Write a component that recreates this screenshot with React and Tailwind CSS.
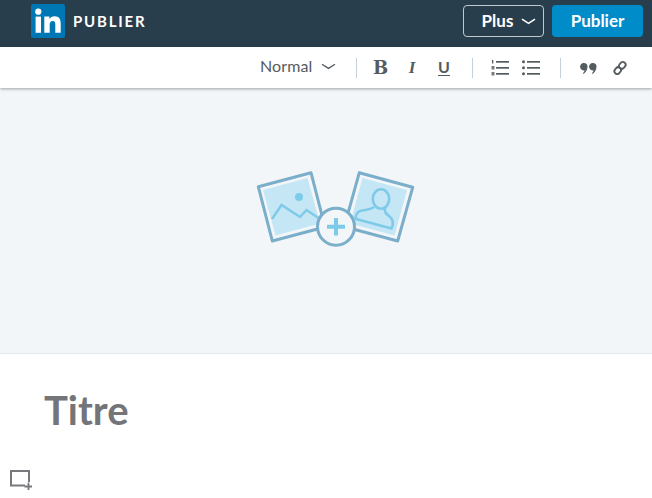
const ui = { fontFamily: '"Lato", "Open Sans", sans-serif' };

function Chevron({ className, color, weight }) {
  return (
    <svg width="15" height="7" viewBox="0 0 15 7" className={className} fill="none">
      <path d="M1 1.200 L7.500 5.400 L14 1.200" stroke={color} strokeWidth={weight} />
    </svg>
  );
}

function Logo() {
  return (
    <svg width="34" height="34" viewBox="0 0 34 34">
      <rect width="34" height="34" rx="2" fill="#0077b5" />
      <circle cx="7.300" cy="7.700" r="3.100" fill="#fff" />
      <rect x="4.600" y="12.600" width="5.400" height="16.200" fill="#fff" />
      <path d="M13.300 12.600h5.100v2.300c.9-1.500 2.600-2.700 5.200-2.700 4.800 0 6.100 3 6.100 7.400v9.200h-5.400v-8.200c0-2-.4-3.700-2.500-3.700-2.200 0-3.100 1.600-3.100 3.700v8.200h-5.400z" fill="#fff" />
    </svg>
  );
}

function Separator() {
  return <div className="w-px h-5 bg-[#c5d0d8]" />;
}

function HeroIcon() {
  const frame = "#7aaecb";
  const accent = "#7dcbe8";
  return (
    <svg width="180" height="100" viewBox="0 0 180 100" fill="none">
      <polygon points="14.300,26.700 67,12.700 81,67 28.300,81" fill="#f3f6f8" stroke={frame} strokeWidth="3" strokeLinejoin="round" />
      <polygon points="19,30 63.500,18 76,63.500 31.500,75.500" fill="#c4e6f5" />
      <path d="M28 59 L37.500 45 L56 57 L62.500 50 L76 59" stroke={accent} strokeWidth="2.400" />
      <circle cx="55" cy="37" r="4" fill={accent} />
      <polygon points="115.300,12.700 168.700,27.300 153.700,81 100.300,66.700" fill="#f3f6f8" stroke={frame} strokeWidth="3" strokeLinejoin="round" />
      <polygon points="118.500,18 163,30 150.500,75.500 106,63.500" fill="#c4e6f5" />
      <ellipse cx="137" cy="39" rx="8.200" ry="9.700" stroke={accent} strokeWidth="2.600" />
      <path d="M130 47 C126 50 120 50 116 51 C113 52 111 56 112 59 L147.500 68.500 C150 63 149 59 145 56 C142 54 140 52 141 48" stroke={accent} strokeWidth="2.600" strokeLinejoin="round" />
      <circle cx="92" cy="66.700" r="18.500" fill="#f3f6f8" stroke={frame} strokeWidth="3" />
      <path d="M92 58 V75.500 M83 66.700 H101" stroke={accent} strokeWidth="4" />
    </svg>
  );
}

export default function App() {
  return (
    <div className="w-[652px] h-[498px] overflow-hidden bg-white flex flex-col" style={ui}>
      <header className="h-[47px] shrink-0 bg-[#293e4c] flex items-start pl-[31px] pr-[9px]">
        <div className="mt-1 mr-2"><Logo /></div>
        <span className="mt-[12px] text-[15px] leading-[18px] font-bold tracking-[1.8px] text-white">PUBLIER</span>
        <div className="ml-auto mt-[5px] flex gap-2">
          <button className="w-[81px] h-8 rounded-sm border border-[#c0c9cf] flex items-center justify-center gap-[8px] pl-[11px] text-white text-[17px] leading-5 font-bold">
            Plus
            <Chevron color="#ffffff" weight="1.600" />
          </button>
          <button className="w-[91px] h-8 rounded-sm bg-[#008cc9] text-white text-[17px] font-bold">Publier</button>
        </div>
      </header>

      <div className="relative z-10 h-[41px] shrink-0 bg-white shadow-[0_1px_3px_rgba(0,0,0,0.35)] flex items-center pl-[260px] text-[#555c60]">
        <span className="text-[16px] leading-5 w-[61px] -mt-[3px] tracking-[0.1px]">Normal</span>
        <Chevron color="#555c60" weight="1.300" className="-mt-0.5" />
        <div className="ml-5"><Separator /></div>
        <span className="w-[17px] ml-[15px] text-center text-[18px] font-bold" style={{ fontFamily: '"DejaVu Serif", serif' }}>B</span>
        <span className="w-[14px] ml-[16px] text-center text-[17px] italic font-bold" style={{ fontFamily: '"Liberation Serif", serif' }}>I</span>
        <span className="w-[16px] ml-[17px] text-center text-[16px] font-bold underline underline-offset-2 -mt-0.5">U</span>
        <div className="ml-5"><Separator /></div>
        <svg width="18" height="16" viewBox="0 0 18 16" className="ml-[18px]" fill="#555c60">
          <rect x="5" y="1" width="13" height="1.700" />
          <rect x="5" y="7" width="13" height="1.700" />
          <rect x="5" y="13" width="13" height="1.700" />
          <rect x="1" y="0" width="1.300" height="3.500" />
          <rect x="0.500" y="6" width="3" height="3.500" opacity="0.8" />
          <rect x="0.500" y="12" width="3" height="3.500" opacity="0.8" />
        </svg>
        <svg width="18" height="16" viewBox="0 0 18 16" className="ml-[13px]" fill="#555c60">
          <rect x="5" y="1" width="13" height="1.700" />
          <rect x="5" y="7" width="13" height="1.700" />
          <rect x="5" y="13" width="13" height="1.700" />
          <circle cx="1.500" cy="1.800" r="1.500" />
          <circle cx="1.500" cy="7.800" r="1.500" />
          <circle cx="1.500" cy="13.800" r="1.500" />
        </svg>
        <div className="ml-5"><Separator /></div>
        <svg width="17" height="11" viewBox="0 0 17 11" className="ml-[19px] mt-px" fill="#555c60">
          <path d="M3.800 0A3.700 3.700 0 0 1 7.500 3.800C7.500 6.500 6 9.500 3.500 11L3 10.200C4 9 4.500 8 4.600 7.300A3.700 3.700 0 1 1 3.800 0Z" />
          <path d="M12.800 0A3.700 3.700 0 0 1 16.500 3.800C16.500 6.500 15 9.500 12.500 11L12 10.200C13 9 13.500 8 13.600 7.300A3.700 3.700 0 1 1 12.800 0Z" />
        </svg>
        <svg width="14" height="14" viewBox="0 0 14 14" className="ml-[16px]" fill="none" stroke="#555c60" strokeWidth="1.900">
          <rect x="6.500" y="1" width="5.500" height="7" rx="2.600" transform="rotate(40 9.500 4.500)" />
          <rect x="2" y="6" width="5.500" height="7" rx="2.600" transform="rotate(40 4.500 9.500)" />
        </svg>
      </div>

      <section className="h-[266px] shrink-0 bg-[#f3f6f8] border-b border-[#e6e9ec] flex items-start justify-center pl-4 pt-[72px]">
        <HeroIcon />
      </section>

      <main className="flex-1 flex flex-col">
        <h1 className="ml-[44px] mt-[32px] text-[40px] leading-[48px] font-bold text-[#737579]">Titre</h1>
        <svg width="22" height="20" viewBox="0 0 22 20" className="ml-[10px] mt-[36px]" fill="none" stroke="#77797c" strokeWidth="2">
          <path d="M15 15.500 H1 V1 H19 V12" />
          <path d="M18.500 12.500 V20 M14.500 16.500 H22" strokeWidth="1.800" />
        </svg>
      </main>
    </div>
  );
}
